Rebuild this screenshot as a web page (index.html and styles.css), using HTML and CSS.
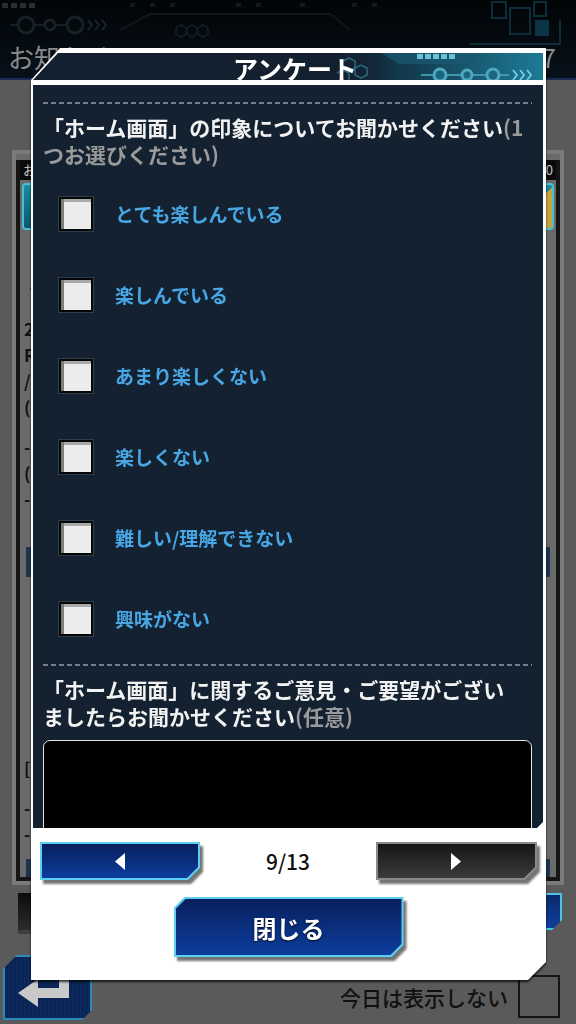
FILE: index.html
```html
<!DOCTYPE html>
<html lang="ja">
<head>
  <meta charset="UTF-8">
  <title>お知らせ - アンケート</title>
  <link rel="stylesheet" href="styles.css">
</head>
<body>

  <header class="topbar">
    <svg class="topbar-deco" width="576" height="78" viewBox="0 0 576 78">
      <g fill="#262e33">
        <rect x="2" y="3" width="6" height="5"/>
        <rect x="11" y="3" width="6" height="5"/>
        <rect x="20" y="3" width="6" height="5"/>
        <rect x="29" y="3" width="6" height="5"/>
      </g>
      <g fill="#101a20">
        <rect x="130" y="3" width="5" height="4"/>
        <rect x="150" y="3" width="5" height="4"/>
        <rect x="170" y="3" width="5" height="4"/>
        <rect x="236" y="3" width="5" height="4"/>
        <rect x="256" y="3" width="5" height="4"/>
        <rect x="300" y="3" width="5" height="4"/>
        <rect x="352" y="3" width="5" height="4"/>
        <rect x="372" y="3" width="5" height="4"/>
      </g>
      <path d="M10 25H80" stroke="#122027" stroke-width="2"/>
      <g fill="#05090c" stroke="#152329" stroke-width="3">
        <circle cx="26" cy="25" r="8"/>
        <circle cx="50" cy="25" r="5"/>
        <circle cx="75" cy="25" r="8"/>
      </g>
      <path d="M88 20l4 5-4 5M95 20l4 5-4 5M102 20l4 5-4 5" fill="none" stroke="#18262d" stroke-width="2"/>
      <path d="M120 30L150 14H330L350 30" fill="none" stroke="#0d171c" stroke-width="2"/>
      <g fill="none" stroke="#111b21" stroke-width="2">
        <path d="M176 28l5-3 5 3v6l-5 3-5-3z"/>
        <path d="M187 28l5-3 5 3v6l-5 3-5-3z"/>
        <path d="M198 28l5-3 5 3v6l-5 3-5-3z"/>
      </g>
      <g fill="none" stroke="#0c2c38" stroke-width="2">
        <rect x="492" y="2" width="14" height="16"/>
        <rect x="510" y="8" width="20" height="26"/>
        <rect x="534" y="2" width="12" height="14"/>
        <path d="M470 44H560V20"/>
      </g>
      <rect x="535" y="20" width="14" height="16" fill="#0b3444"/>
    </svg>
    <span class="topbar-title">お知らせ</span>
    <span class="topbar-count">37</span>
  </header>

  <section class="notice-panel">
    <div class="notice-frame">
      <div class="notice-head">
        <span>お</span>
        <span>10</span>
      </div>
      <div class="notice-icons">
        <span class="notice-icon teal"></span>
        <span class="notice-icon gold"></span>
      </div>
      <div class="notice-text">
        <p>【告知】</p>
        <p>・概要</p>
        <p class="gap">2016年</p>
        <p>RANK</p>
        <p>/ 報酬</p>
        <p>(詳細)</p>
        <p class="gap">- 注意 -</p>
        <p>(予定)</p>
        <p>- 以上 -</p>
        <div class="notice-bar"></div>
        <p class="gap-lg">：</p>
        <p>[備考]</p>
        <p class="gap">- 運営 -</p>
        <p>- 問合せ -</p>
        <div class="notice-bar short"></div>
      </div>
    </div>
  </section>

  <div class="bg-actions">
    <span class="bg-btn dark"></span>
    <span class="bg-btn blue"></span>
  </div>

  <footer class="bg-footer">
    <span class="back-btn">
      <svg width="60" height="40" viewBox="0 0 60 40">
        <path d="M4 22L24 8V17H45V4H55V27H24V36Z" fill="#c9c9c9"/>
      </svg>
    </span>
    <label class="skip-today">今日は表示しない<span class="skip-box"></span></label>
  </footer>

  <div class="modal-wrap">
    <div class="modal">
      <div class="modal-title">
        <svg class="title-deco" width="210" height="27" viewBox="0 0 210 27">
          <defs>
            <linearGradient id="tg" x1="0" x2="1" y1="0" y2="0">
              <stop offset="0" stop-color="#13202f" stop-opacity="0"/>
              <stop offset="0.3" stop-color="#123649"/>
              <stop offset="1" stop-color="#1d7a95"/>
            </linearGradient>
          </defs>
          <rect width="210" height="27" fill="url(#tg)"/>
          <path d="M48 0L66 11H132L150 0Z" fill="#1a5a72" opacity="0.7"/>
          <g fill="none" stroke="#2d6a80" stroke-width="1.5">
            <path d="M10 8l6-3 6 3v7l-6 3-6-3z"/>
            <path d="M22 15l6-3 6 3v7l-6 3-6-3z"/>
            <path d="M4 20l6-3 6 3v7"/>
          </g>
          <g fill="#6cc0d6">
            <rect x="84" y="1" width="6" height="5"/>
            <rect x="92" y="1" width="6" height="5"/>
            <rect x="100" y="1" width="6" height="5"/>
            <rect x="108" y="1" width="6" height="5"/>
            <rect x="116" y="1" width="6" height="5"/>
          </g>
          <path d="M88 22H176" stroke="#3f97b0" stroke-width="2"/>
          <g fill="#1a6580" stroke="#4ea8c0" stroke-width="3">
            <circle cx="107" cy="22" r="6"/>
            <circle cx="134" cy="22" r="5"/>
            <circle cx="160" cy="22" r="6"/>
          </g>
          <path d="M180 17l4 5-4 5M187 17l4 5-4 5M194 17l4 5-4 5" fill="none" stroke="#72c8de" stroke-width="2"/>
        </svg>
        <h2>アンケート</h2>
      </div>

      <div class="modal-body">
        <div class="dash"></div>
        <p class="question">「ホーム画面」の印象についてお聞かせください<span class="note">(1<br>つお選びください)</span></p>
        <ul class="choices">
          <li><span class="check"></span>とても楽しんでいる</li>
          <li><span class="check"></span>楽しんでいる</li>
          <li><span class="check"></span>あまり楽しくない</li>
          <li><span class="check"></span>楽しくない</li>
          <li><span class="check"></span>難しい/理解できない</li>
          <li><span class="check"></span>興味がない</li>
        </ul>
        <div class="dash"></div>
        <p class="question">「ホーム画面」に関するご意見・ご要望がござい<br>ましたらお聞かせください<span class="note">(任意)</span></p>
        <div class="comment"></div>
      </div>

      <div class="modal-foot">
        <div class="pager">
          <button class="page-btn prev">
            <span class="btn-face"><span class="btn-fill">
              <svg width="10" height="17" viewBox="0 0 10 17"><path d="M10 0V17L0 8.5Z" fill="#fff"/></svg>
            </span></span>
          </button>
          <span class="page-num">9/13</span>
          <button class="page-btn next">
            <span class="btn-face"><span class="btn-fill">
              <svg width="10" height="17" viewBox="0 0 10 17"><path d="M0 0V17L10 8.5Z" fill="#fff"/></svg>
            </span></span>
          </button>
        </div>
        <button class="close-btn">
          <span class="btn-face"><span class="btn-fill">閉じる</span></span>
        </button>
      </div>
    </div>
  </div>

</body>
</html>
```

FILE: styles.css
```css
* {
  box-sizing: border-box;
}

body {
  margin: 0;
  width: 576px;
  height: 1024px;
  overflow: hidden;
  position: relative;
  background: #5a5a5a;
  font-family: "Noto Sans CJK JP", "Noto Sans", sans-serif;
}

p {
  margin: 0;
}

/* background screen */

.topbar {
  position: relative;
  height: 80px;
  display: flex;
  justify-content: space-between;
  align-items: flex-end;
  padding: 0 20px 6px 8px;
  background: linear-gradient(#020406, #07111a);
  border-bottom: 2px solid #1b2956;
  color: #8b8b8b;
  font-size: 26px;
  line-height: 30px;
}

.topbar-deco {
  position: absolute;
  top: 0;
  left: 0;
}

.topbar-title,
.topbar-count {
  position: relative;
}

.notice-panel {
  margin: 70px 12px 0;
  height: 735px;
  border: 4px solid #7a7a7a;
  background: #6a6a6a;
  padding-top: 6px;
}

.notice-frame {
  height: 100%;
  border: 4px solid #151515;
  border-top: 0;
  overflow: hidden;
}

.notice-head {
  height: 20px;
  display: flex;
  justify-content: space-between;
  padding: 0 3px;
  background: #0b0b0b;
  color: #c4c4c4;
  font-size: 13px;
  line-height: 20px;
}

.notice-icons {
  display: flex;
  justify-content: space-between;
  padding: 3px 2px 0;
}

.notice-icon {
  width: 50px;
  height: 47px;
  border-radius: 4px;
}

.notice-icon.teal {
  background: linear-gradient(#1b8b9e, #0c566b);
  border: 2px solid #46c0d6;
}

.notice-icon.gold {
  background: linear-gradient(135deg, #1b8b9e 55%, #c9a23a 55%);
  border: 2px solid #46c0d6;
}

.notice-text {
  padding: 20px 4px 0;
  color: #111;
  font-size: 17px;
  font-weight: 700;
  line-height: 26px;
  white-space: nowrap;
}

.notice-text .gap {
  margin-top: 14px;
}

.notice-text .gap-lg {
  margin-top: 152px;
}

.notice-bar {
  height: 30px;
  margin: 35px 2px 0;
  background: #1d3450;
}

.notice-bar.short {
  height: 28px;
  margin-top: 12px;
}

.bg-actions {
  display: flex;
  justify-content: space-between;
  height: 37px;
  margin: 8px 14px 0 18px;
}

.bg-btn {
  width: 182px;
}

.bg-btn.dark {
  background: linear-gradient(#0c0c0c, #2c2c2c);
  box-shadow: 0 4px 0 #3e3e3e;
}

.bg-btn.blue {
  background: linear-gradient(#0a2a6a, #0d3f9c);
  border: 2px solid #4fc2ea;
  clip-path: polygon(0 0, 100% 0, 100% calc(100% - 10px), calc(100% - 10px) 100%, 0 100%);
}

.bg-footer {
  display: flex;
  align-items: flex-end;
  height: 65px;
  margin-top: 25px;
  padding-left: 3px;
}

.back-btn {
  width: 89px;
  height: 65px;
  display: flex;
  align-items: center;
  justify-content: center;
  padding: 6px 8px 0 0;
  background: repeating-linear-gradient(90deg, #0b2656 0 3px, #0d2b60 3px 4px);
  border: 2px solid #2b8ab8;
  clip-path: polygon(14px 0, 100% 0, 100% calc(100% - 10px), calc(100% - 10px) 100%, 0 100%, 0 14px);
}

.skip-today {
  margin: 0 16px 2px auto;
  display: flex;
  align-items: center;
  gap: 10px;
  height: 43px;
  color: #111;
  font-size: 21px;
  font-weight: 500;
}

.skip-box {
  width: 42px;
  height: 43px;
  border: 2px solid #161616;
}

/* survey dialog */

.modal-wrap {
  position: absolute;
  top: 48px;
  left: 31px;
  width: 515px;
  filter: drop-shadow(0 2px 1px rgba(0, 0, 0, 0.75));
}

.modal {
  height: 932px;
  display: flex;
  flex-direction: column;
  padding: 5px 3px 0 2px;
  background: #fff;
  clip-path: polygon(29px 0, 100% 0, 100% calc(100% - 18px), calc(100% - 18px) 100%, 0 100%, 0 32px);
}

.modal-title {
  position: relative;
  flex: none;
  height: 27px;
  background: #13202f;
  clip-path: polygon(25px 0, 100% 0, 100% 100%, 0 100%);
}

.title-deco {
  position: absolute;
  top: 0;
  right: 0;
}

.modal-title h2 {
  position: relative;
  margin: 0;
  padding-left: 14px;
  text-align: center;
  color: #fff;
  font-size: 25px;
  font-weight: 700;
  line-height: 31px;
}

.modal-body {
  flex: none;
  height: 743px;
  margin-top: 5px;
  padding: 17px 11px 0 10px;
  overflow: hidden;
  background: #132130;
  clip-path: polygon(0 0, 100% 0, 100% calc(100% - 6px), calc(100% - 6px) 100%, 0 100%);
}

.dash {
  height: 2px;
  background: repeating-linear-gradient(90deg, #747e88 0 5px, transparent 5px 8px);
}

.question {
  margin-top: 10px;
  color: #f2f2f2;
  font-size: 21px;
  font-weight: 700;
  line-height: 27px;
}

.question .note {
  color: #9a9a9a;
}

.choices {
  list-style: none;
  margin: 5px 0;
  padding: 0;
}

.choices li {
  display: flex;
  align-items: center;
  gap: 22px;
  height: 81px;
  padding-left: 16px;
  color: #48a6e4;
  font-size: 19px;
  font-weight: 700;
}

.check {
  width: 34px;
  height: 34px;
  border: 2px solid #060606;
  background: #ececec;
  box-shadow: inset 3px 0 0 #7d7d7d, inset 0 3px 0 #a9a9a9, 0 0 0 1px #2f3e4e;
}

.comment {
  height: 120px;
  margin-top: 10px;
  background: #000;
  border: 1px solid #e6e6e6;
  border-radius: 7px;
}

.modal-foot {
  flex: 1;
  padding: 14px 6px 0 7px;
}

.pager {
  display: flex;
  justify-content: space-between;
  align-items: center;
  height: 38px;
}

.page-num {
  color: #111;
  font-size: 21px;
  font-weight: 500;
}

.page-btn,
.close-btn {
  display: block;
  padding: 0;
  border: none;
  background: none;
  filter: drop-shadow(3px 4px 1px rgba(0, 0, 0, 0.55));
  cursor: pointer;
}

.page-btn {
  width: 160px;
  height: 38px;
}

.page-btn.next {
  width: 161px;
}

.btn-face {
  display: flex;
  height: 100%;
  padding: 2px;
  background: #5ccff4;
  clip-path: polygon(0 0, 100% 0, 100% calc(100% - 12px), calc(100% - 12px) 100%, 0 100%);
}

.btn-fill {
  flex: 1;
  display: flex;
  align-items: center;
  justify-content: center;
  background: linear-gradient(#081f5c, #0c3e9e);
  clip-path: polygon(0 0, 100% 0, 100% calc(100% - 11px), calc(100% - 11px) 100%, 0 100%);
}

.next .btn-face {
  background: #8a8a8a;
}

.next .btn-fill {
  background: linear-gradient(#161616, #3b3b3b);
}

.close-btn {
  width: 230px;
  height: 60px;
  margin: 17px auto 0;
}

.close-btn .btn-face {
  clip-path: polygon(11px 0, 100% 0, 100% calc(100% - 12px), calc(100% - 12px) 100%, 0 100%, 0 11px);
}

.close-btn .btn-fill {
  clip-path: polygon(10px 0, 100% 0, 100% calc(100% - 11px), calc(100% - 11px) 100%, 0 100%, 0 10px);
  color: #fff;
  font-family: "Noto Sans CJK JP", sans-serif;
  font-size: 24px;
  font-weight: 700;
  text-shadow: 0 1px 2px rgba(0, 0, 0, 0.8);
}
```
